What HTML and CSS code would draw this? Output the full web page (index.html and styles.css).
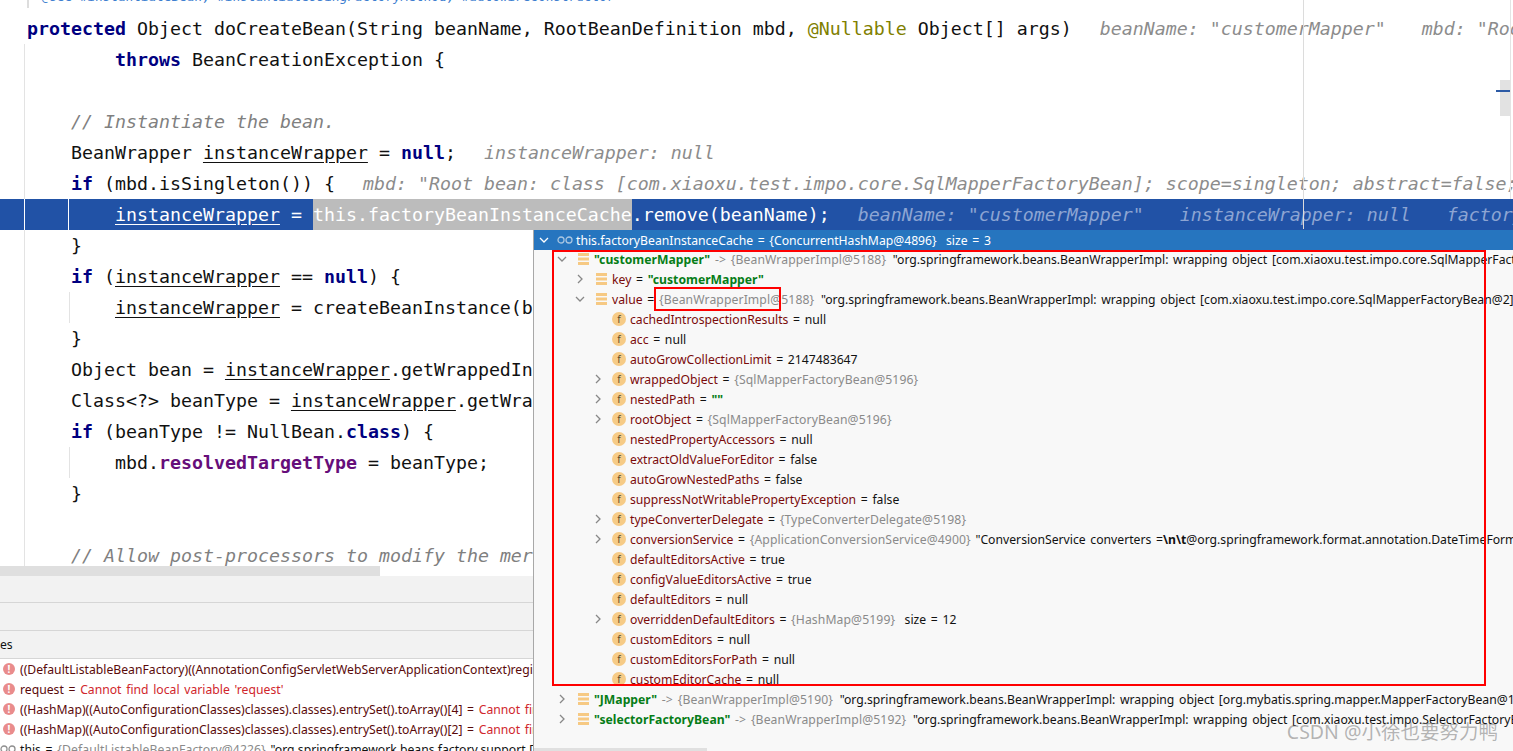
FILE: index.html
```html
<!doctype html>
<html lang="en">
  <head>
    <meta charset="UTF-8" />
    <title>doCreateBean debug</title>
    <link rel="stylesheet" href="styles.css">
  </head>
  <body>
    <svg class="Defs" width="0" height="0">
      <symbol id="open" viewBox="0 0 10 10"><path d="M1 3l4 4 4-4" fill="none" stroke="currentColor" stroke-width="1.3" /></symbol>
      <symbol id="closed" viewBox="0 0 10 10"><path d="M3 1l4 4-4 4" fill="none" stroke="currentColor" stroke-width="1.3" /></symbol>
      <symbol id="map" viewBox="0 0 11 12"><path d="M0 0h11v3H0zM0 4.500h11v3H0zM0 9h11v3H0z" fill="#f6c983" /></symbol>
      <symbol id="watch" viewBox="0 0 16 8"><circle cx="4" cy="4" r="3" fill="none" stroke="currentColor" stroke-width="1.300" /><circle cx="12" cy="4" r="3" fill="none" stroke="currentColor" stroke-width="1.300" /></symbol>
    </svg>

    <section class="Editor">
      <div class="Code">
        <div class="Line Line--doc"><span class="doc">@see #instantiateBean, #instantiateUsingFactoryMethod, #autowireConstructor</span></div>
        <div class="Line"><b>protected</b> Object doCreateBean(String beanName, RootBeanDefinition mbd, <span class="ann">@Nullable</span> Object[] args)<i class="hint">beanName: "customerMapper"</i><i class="hint hint--next">mbd: "Root bean: class [com.xiaoxu.test.impo.core.SqlMapperFactoryBean]</i></div>
        <div class="Line">        <b>throws</b> BeanCreationException {</div>
        <div class="Line"> </div>
        <div class="Line">    <i class="comment">// Instantiate the bean.</i></div>
        <div class="Line">    BeanWrapper <u>instanceWrapper</u> = <b>null</b>;<i class="hint">instanceWrapper: null</i></div>
        <div class="Line">    <b>if</b> (mbd.isSingleton()) {<i class="hint">mbd: "Root bean: class [com.xiaoxu.test.impo.core.SqlMapperFactoryBean]; scope=singleton; abstract=false; lazyInit=null"</i></div>
        <div class="Line Line--current">        <u>instanceWrapper</u> = <span class="selected">this.factoryBeanInstanceCache</span>.remove(beanName);<i class="hint">beanName: "customerMapper"</i><i class="hint hint--next">instanceWrapper: null</i><i class="hint hint--next">factoryBeanInstanceCache</i></div>
        <div class="Line">    }</div>
        <div class="Line">    <b>if</b> (<u>instanceWrapper</u> == <b>null</b>) {</div>
        <div class="Line Line--guide">        <u>instanceWrapper</u> = createBeanInstance(beanName, mbd, args);</div>
        <div class="Line">    }</div>
        <div class="Line">    Object bean = <u>instanceWrapper</u>.getWrappedInstance();</div>
        <div class="Line">    Class&lt;?&gt; beanType = <u>instanceWrapper</u>.getWrappedClass();</div>
        <div class="Line">    <b>if</b> (beanType != NullBean.<b>class</b>) {</div>
        <div class="Line Line--guide">        mbd.<b class="field">resolvedTargetType</b> = beanType;</div>
        <div class="Line">    }</div>
        <div class="Line"> </div>
        <div class="Line">    <i class="comment">// Allow post-processors to modify the merged bean definition.</i></div>
      </div>
      <div class="Scroll"><div class="Scroll-thumb"></div></div>
      <div class="Margin"></div>
      <div class="Stripe"></div>
      <div class="Marker"></div>
    </section>

    <section class="Panel">
      <div class="Bar Bar--first"></div>
      <div class="Bar"></div>
      <div class="Bar Bar--label">es</div>
      <ul class="Watches">
        <li><span class="err">!</span>((DefaultListableBeanFactory)((AnnotationConfigServletWebServerApplicationContext)registry)</li>
        <li><span class="err">!</span>request = <span class="red">Cannot find local variable 'request'</span></li>
        <li><span class="err">!</span>((HashMap)((AutoConfigurationClasses)classes).classes).entrySet().toArray()[4] = <span class="red">Cannot find</span></li>
        <li><span class="err">!</span>((HashMap)((AutoConfigurationClasses)classes).classes).entrySet().toArray()[2] = <span class="red">Cannot find</span></li>
        <li><svg class="glasses"><use href="#watch" /></svg>this = <span class="ref">{DefaultListableBeanFactory@4226}</span> "org.springframework.beans.factory.support.DefaultListable</li>
      </ul>
    </section>

    <section class="Popup">
      <header class="Popup-head">
        <svg class="chev"><use href="#open" /></svg>
        <svg class="glasses"><use href="#watch" /></svg>
        <span>this.factoryBeanInstanceCache = {ConcurrentHashMap@4896}&nbsp; size = 3</span>
      </header>
      <div class="Tree">
        <div class="Row Row--0"><svg class="chev"><use href="#open" /></svg><svg class="mapicon"><use href="#map" /></svg><span><span class="str">"customerMapper"</span> <span class="ref arrow">-&gt; {BeanWrapperImpl@5188}</span> <span class="val">"org.springframework.beans.BeanWrapperImpl: wrapping object [com.xiaoxu.test.impo.core.SqlMapperFactoryBean@2]"</span></span></div>
        <div class="Row Row--1"><svg class="chev"><use href="#closed" /></svg><svg class="mapicon"><use href="#map" /></svg><span><span class="name">key</span> = <span class="str">"customerMapper"</span></span></div>
        <div class="Row Row--1"><svg class="chev"><use href="#open" /></svg><svg class="mapicon"><use href="#map" /></svg><span><span class="name">value</span> = <span class="ref">{BeanWrapperImpl@5188}</span> <span class="val">"org.springframework.beans.BeanWrapperImpl: wrapping object [com.xiaoxu.test.impo.core.SqlMapperFactoryBean@2]"</span></span></div>
        <div class="Row Row--2"><span class="chev"></span><span class="fld">f</span><span><span class="name">cachedIntrospectionResults</span> = null</span></div>
        <div class="Row Row--2"><span class="chev"></span><span class="fld">f</span><span><span class="name">acc</span> = null</span></div>
        <div class="Row Row--2"><span class="chev"></span><span class="fld">f</span><span><span class="name">autoGrowCollectionLimit</span> = 2147483647</span></div>
        <div class="Row Row--2"><svg class="chev"><use href="#closed" /></svg><span class="fld">f</span><span><span class="name">wrappedObject</span> = <span class="ref">{SqlMapperFactoryBean@5196}</span></span></div>
        <div class="Row Row--2"><svg class="chev"><use href="#closed" /></svg><span class="fld">f</span><span><span class="name">nestedPath</span> = <span class="str">""</span></span></div>
        <div class="Row Row--2"><svg class="chev"><use href="#closed" /></svg><span class="fld">f</span><span><span class="name">rootObject</span> = <span class="ref">{SqlMapperFactoryBean@5196}</span></span></div>
        <div class="Row Row--2"><span class="chev"></span><span class="fld">f</span><span><span class="name">nestedPropertyAccessors</span> = null</span></div>
        <div class="Row Row--2"><span class="chev"></span><span class="fld">f</span><span><span class="name">extractOldValueForEditor</span> = false</span></div>
        <div class="Row Row--2"><span class="chev"></span><span class="fld">f</span><span><span class="name">autoGrowNestedPaths</span> = false</span></div>
        <div class="Row Row--2"><span class="chev"></span><span class="fld">f</span><span><span class="name">suppressNotWritablePropertyException</span> = false</span></div>
        <div class="Row Row--2"><svg class="chev"><use href="#closed" /></svg><span class="fld">f</span><span><span class="name">typeConverterDelegate</span> = <span class="ref">{TypeConverterDelegate@5198}</span></span></div>
        <div class="Row Row--2"><svg class="chev"><use href="#closed" /></svg><span class="fld">f</span><span><span class="name">conversionService</span> = <span class="ref">{ApplicationConversionService@4900}</span> "ConversionService converters =<b>\n\t</b>@org.springframework.format.annotation.DateTimeFormat"</span></div>
        <div class="Row Row--2"><span class="chev"></span><span class="fld">f</span><span><span class="name">defaultEditorsActive</span> = true</span></div>
        <div class="Row Row--2"><span class="chev"></span><span class="fld">f</span><span><span class="name">configValueEditorsActive</span> = true</span></div>
        <div class="Row Row--2"><span class="chev"></span><span class="fld">f</span><span><span class="name">defaultEditors</span> = null</span></div>
        <div class="Row Row--2"><svg class="chev"><use href="#closed" /></svg><span class="fld">f</span><span><span class="name">overriddenDefaultEditors</span> = <span class="ref">{HashMap@5199}</span>  size = 12</span></div>
        <div class="Row Row--2"><span class="chev"></span><span class="fld">f</span><span><span class="name">customEditors</span> = null</span></div>
        <div class="Row Row--2"><span class="chev"></span><span class="fld">f</span><span><span class="name">customEditorsForPath</span> = null</span></div>
        <div class="Row Row--2"><span class="chev"></span><span class="fld">f</span><span><span class="name">customEditorCache</span> = null</span></div>
        <div class="Row Row--0"><svg class="chev"><use href="#closed" /></svg><svg class="mapicon"><use href="#map" /></svg><span><span class="str">"JMapper"</span> <span class="ref arrow">-&gt; {BeanWrapperImpl@5190}</span> <span class="val">"org.springframework.beans.BeanWrapperImpl: wrapping object [org.mybatis.spring.mapper.MapperFactoryBean@1]"</span></span></div>
        <div class="Row Row--0"><svg class="chev"><use href="#closed" /></svg><svg class="mapicon"><use href="#map" /></svg><span><span class="str">"selectorFactoryBean"</span> <span class="ref arrow">-&gt; {BeanWrapperImpl@5192}</span> <span class="val">"org.springframework.beans.BeanWrapperImpl: wrapping object [com.xiaoxu.test.impo.SelectorFactoryBean@3]"</span></span></div>
      </div>
      <div class="Popup-scroll"></div>
      <div class="Box Box--tree"></div>
      <div class="Box Box--ref"></div>
    </section>

    <div class="Mark">CSDN @小徐也要努力鸭</div>
  </body>
</html>
```

FILE: styles.css
```css
:root {
  --color-current: #2152a6;
  --color-head: #2675bf;
  --color-name: #7a0a0a;
  --color-ref: #8a8a8a;
  --color-str: #067d17;
  --color-rule: #e3e3e3;
}

body {
  margin: 0;
  width: 1513px;
  height: 751px;
  overflow: hidden;
  position: relative;
  background-color: #fff;
  font-family: "Noto Sans", sans-serif;
  font-size: 12.2px;
  word-spacing: 1.5px;
  color: #111;
}

.Defs {
  position: absolute;
}

/* Editor */
.Editor {
  position: relative;
  display: flex;
  flex-direction: column;
  height: 576px;
  overflow: hidden;
}
.Code {
  flex: 1;
  min-height: 0;
  overflow: hidden;
  margin-top: -18px;
  font-family: "DejaVu Sans Mono", monospace;
  font-size: 18.27px;
  word-spacing: 0;
  color: #111;
  background:
    linear-gradient(#ddd, #ddd) 27px 0 / 2px 26px no-repeat,
    linear-gradient(var(--color-rule), var(--color-rule)) 24px 62px / 1px 100% no-repeat;
}
.Line {
  height: 31px;
  line-height: 31px;
  padding-left: 27px;
  overflow: hidden;
  white-space: pre;
}
.Line--doc {
  padding-left: 42px;
  font-size: 12.7px;
  line-height: 30px;
}
.Line--guide {
  background: linear-gradient(var(--color-rule), var(--color-rule)) 69px 0 / 1px 100% no-repeat;
}
.Line--current {
  color: #fff;
  background:
    linear-gradient(#fff, #fff) 24px 0 / 1px 100% no-repeat,
    linear-gradient(#fff, #fff) 68px 0 / 1px 100% no-repeat,
    var(--color-current);
}
.Line b {
  color: #000080;
}
.Line b.field {
  color: #660e7a;
}
.Line u {
  text-underline-offset: 3px;
}
.doc {
  color: #3f7fd0;
  font-style: italic;
}
.ann {
  color: #808000;
}
.comment {
  color: #808080;
}
.hint {
  margin-left: 28px;
  color: #8c8c8c;
}
.hint--next {
  margin-left: 36px;
}
.Line--current .hint {
  color: #8da5d3;
}
.selected {
  padding: 8px 0;
  background-color: #bcbcbc;
}
.Scroll {
  flex: none;
  height: 10px;
}
.Scroll-thumb {
  width: 380px;
  height: 100%;
  background-color: #dfdfdf;
}
.Margin {
  position: absolute;
  top: 0;
  left: 1303px;
  width: 1px;
  height: 229px;
  background-color: #dcdcdc;
}
.Stripe {
  position: absolute;
  top: 0;
  left: 1510px;
  width: 1px;
  height: 199px;
  background-color: #e4e4e4;
}
.Marker {
  position: absolute;
  top: 80px;
  left: 1500px;
  width: 10px;
  height: 36px;
  background-color: #e2e2e2;
}
.Marker::before {
  content: "";
  position: absolute;
  top: 10px;
  left: -4px;
  width: 14px;
  height: 2px;
  background-color: #2c5aa5;
}

/* Bottom panel */
.Bar {
  height: 27px;
  background-color: #f2f2f2;
  border-bottom: 1px solid #d6d6d6;
}
.Bar--first {
  height: 26px;
}
.Bar--label {
  line-height: 27px;
}
.Watches {
  list-style: none;
  margin: 0;
  padding: 0;
}
.Watches li {
  display: flex;
  align-items: center;
  height: 20px;
  white-space: pre;
  overflow: hidden;
  color: #5a0a0a;
}
.Watches li:last-child {
  color: #111;
}
.err {
  flex: none;
  width: 12px;
  height: 12px;
  margin: 0 5px 0 3px;
  border-radius: 50%;
  background-color: #e98c8c;
  color: #fff;
  font-size: 10px;
  font-weight: 700;
  line-height: 12px;
  text-align: center;
}
.red {
  color: #d0262c;
}
.glasses {
  flex: none;
  width: 16px;
  height: 8px;
  color: #8f8f8f;
}
.Watches .glasses {
  margin: 0 4px 0 0;
}

/* Evaluate popup */
.Popup {
  position: absolute;
  top: 230px;
  left: 533px;
  right: 0;
  bottom: 0;
  overflow: hidden;
  background-color: #f8f8f8;
  border-left: 1px solid #a8a8a8;
}
.Popup-head {
  display: flex;
  align-items: center;
  height: 20px;
  padding-left: 5px;
  white-space: pre;
  background-color: var(--color-head);
  color: #fff;
}
.Popup-head .chev {
  margin-right: 8px;
  color: #fff;
}
.Popup-head .glasses {
  margin-right: 3px;
  color: #a9c6e2;
}
.Tree {
  height: 498px;
  margin-top: -1px;
  overflow: hidden;
}
.Row {
  display: flex;
  align-items: center;
  height: 20px;
  white-space: pre;
}
.Row--0 {
  padding-left: 23px;
}
.Row--1 {
  padding-left: 41px;
}
.Row--2 {
  padding-left: 59px;
}
.chev {
  flex: none;
  width: 10px;
  height: 10px;
  color: #888;
}
.mapicon {
  flex: none;
  width: 11px;
  height: 12px;
  margin: 0 5px 0 11px;
}
.fld {
  flex: none;
  width: 14px;
  height: 14px;
  margin: 0 4px 0 9px;
  border-radius: 50%;
  background-color: #f6cb86;
  color: #5a4a2a;
  font-size: 10px;
  line-height: 14px;
  text-align: center;
}
.name {
  color: var(--color-name);
}
.str {
  color: var(--color-str);
  font-weight: 700;
}
.ref {
  color: var(--color-ref);
  letter-spacing: 0.1px;
}
.val {
  margin-left: 2px;
}
.Popup-scroll {
  width: 173px;
  height: 3px;
  margin-top: 1px;
  background-color: #e0e0e0;
}
.Box {
  position: absolute;
  box-sizing: border-box;
  border: 2px solid #f00;
}
.Box--tree {
  top: 20px;
  left: 18px;
  width: 934px;
  height: 436px;
}
.Box--ref {
  top: 57px;
  left: 120px;
  width: 127px;
  height: 24px;
}

/* Watermark */
.Mark {
  position: absolute;
  right: 15px;
  bottom: 6px;
  font-size: 19.5px;
  word-spacing: 0;
  color: rgba(120, 120, 120, 0.55);
  font-family: "Noto Sans", "Noto Sans CJK SC", sans-serif;
}
```
